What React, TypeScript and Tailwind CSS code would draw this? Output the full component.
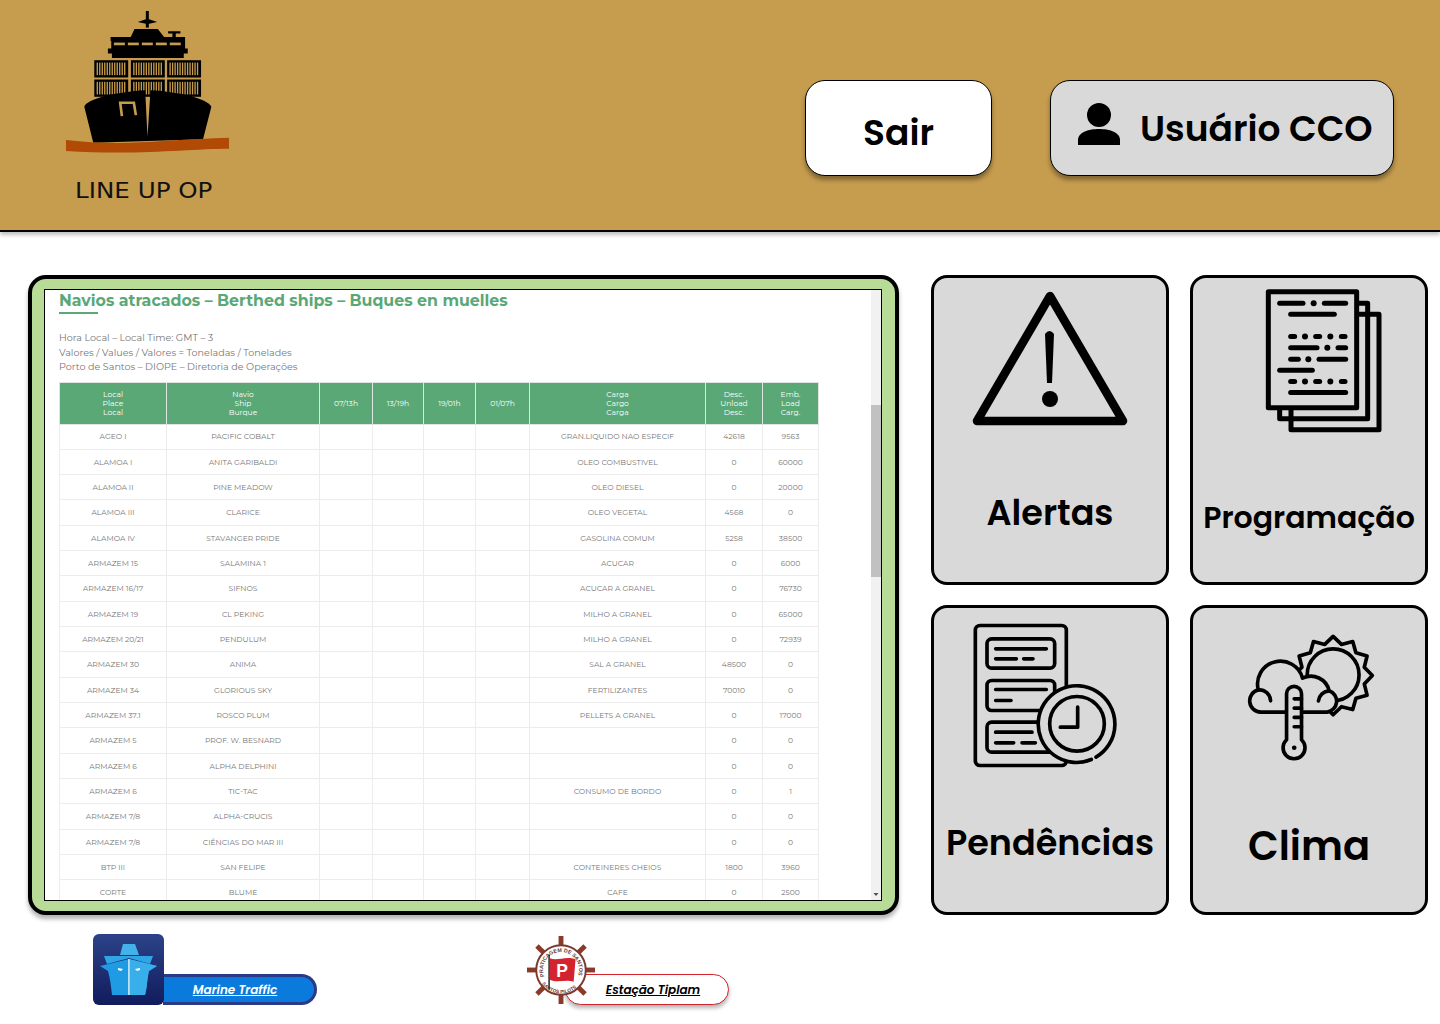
import { ReactNode } from "react";

const UI_FONT = "font-['Poppins','Inter','Noto_Sans',sans-serif]";
const CARD_BG = "#d9d9d9";

const ROWS = [
  ["AGEO I", "PACIFIC COBALT", "GRAN.LIQUIDO NAO ESPECIF", "42618", "9563"],
  ["ALAMOA I", "ANITA GARIBALDI", "OLEO COMBUSTIVEL", "0", "60000"],
  ["ALAMOA II", "PINE MEADOW", "OLEO DIESEL", "0", "20000"],
  ["ALAMOA III", "CLARICE", "OLEO VEGETAL", "4568", "0"],
  ["ALAMOA IV", "STAVANGER PRIDE", "GASOLINA COMUM", "5258", "38500"],
  ["ARMAZEM 15", "SALAMINA 1", "ACUCAR", "0", "6000"],
  ["ARMAZEM 16/17", "SIFNOS", "ACUCAR A GRANEL", "0", "76730"],
  ["ARMAZEM 19", "CL PEKING", "MILHO A GRANEL", "0", "65000"],
  ["ARMAZEM 20/21", "PENDULUM", "MILHO A GRANEL", "0", "72939"],
  ["ARMAZEM 30", "ANIMA", "SAL A GRANEL", "48500", "0"],
  ["ARMAZEM 34", "GLORIOUS SKY", "FERTILIZANTES", "70010", "0"],
  ["ARMAZEM 37.1", "ROSCO PLUM", "PELLETS A GRANEL", "0", "17000"],
  ["ARMAZEM 5", "PROF. W. BESNARD", "", "0", "0"],
  ["ARMAZEM 6", "ALPHA DELPHINI", "", "0", "0"],
  ["ARMAZEM 6", "TIC-TAC", "CONSUMO DE BORDO", "0", "1"],
  ["ARMAZEM 7/8", "ALPHA-CRUCIS", "", "0", "0"],
  ["ARMAZEM 7/8", "CIÊNCIAS DO MAR III", "", "0", "0"],
  ["BTP III", "SAN FELIPE", "CONTEINERES CHEIOS", "1800", "3960"],
  ["CORTE", "BLUME", "CAFE", "0", "2500"],
];

const COLUMN_WIDTHS = [107, 153, 53, 51, 52, 54, 176, 57, 56];

function ShipLogo() {
  const containerXs = [163, 273, 382];
  const containerYs = [180, 238];
  const stripes = Array.from({ length: 12 }, (_, i) => i);

  return (
    <svg viewBox="60 20 520 445" className="h-[148px] w-[173px]">
      <rect x="318" y="32" width="9" height="50" />
      <path d="M294 65 L318 57 H328 L352 65 L328 70 H318 Z" />
      <path d="M272 112 L284 86 H354 L374 112 Z" />
      <path d="M385 93 H422 V100 H408 V112 H398 V100 H385 Z" />
      <path d="M212 110 H436 V145 H444 V160 H432 V173 H216 V160 H204 V145 H214 V122 H212 Z" />
      {[222, 264, 306, 348, 390].map((x) => (
        <rect key={x} x={x} y="127" width="33" height="8" fill="#c69c4e" />
      ))}
      {containerYs.map((y) =>
        containerXs.map((x) => (
          <g key={`${x}-${y}`}>
            <rect x={x} y={y} width="102" height="52" />
            {stripes.map((i) => (
              <rect key={i} x={x + 7 + i * 7.5} y={y + 7} width="4" height="38" fill="#c69c4e" />
            ))}
          </g>
        )),
      )}
      <path d="M133 320 C140 295 230 275 316 270 L323 410 L332 270 C420 275 505 295 515 320 L490 418 L160 428 Z" />
      <path d="M246 348 L241 308 H282 L288 345" fill="none" stroke="#c69c4e" strokeWidth="8" />
      <path d="M78 420 C180 432 280 430 370 423 C440 418 510 415 568 413 V446 C450 446 300 466 78 453 Z" fill="#b04a05" />
    </svg>
  );
}

function AlertIcon() {
  return (
    <svg viewBox="0 0 160 140" className="h-[140px] w-[160px]">
      <path d="M80 5 L153 130 H7 Z" fill="none" stroke="#000" strokeWidth="8.500" strokeLinejoin="round" />
      <path d="M75 43 Q79.500 37 84 43 L82 92 H77 Z" />
      <circle cx="80" cy="108" r="8" />
    </svg>
  );
}

function DocumentsIcon() {
  const lines = [
    "M120 68 H190", "M254 68 H318", "M153 101 H284",
    "M153 168 H165", "M228 168 H240", "M305 168 H316",
    "M153 202 H232", "M295 202 H318",
    "M153 236 H176", "M238 236 H318",
    "M120 269 H218",
    "M153 303 H165", "M228 303 H240", "M305 303 H316",
    "M153 336 H318",
  ];
  const dots: [number, number][] = [[222, 68], [196, 168], [272, 168], [263, 202], [206, 236], [196, 303], [272, 303]];

  return (
    <svg viewBox="70 20 360 440" className="h-[147px] w-[120px]">
      <g fill="none" stroke="#000" strokeWidth="15" strokeLinejoin="round" strokeLinecap="round">
        <path d="M356 101 H418 V448 H154 V388" />
        <path d="M356 68 H384 V415 H120 V388" />
        <rect x="86" y="34" width="265" height="348" />
        {lines.map((d) => (
          <path key={d} d={d} />
        ))}
      </g>
      {dots.map(([cx, cy]) => (
        <circle key={`${cx}-${cy}`} cx={cx} cy={cy} r="9" />
      ))}
    </svg>
  );
}

function PendingIcon() {
  return (
    <svg viewBox="35 20 450 440" className="h-[147px] w-[150px]">
      <g fill="none" stroke="#000" strokeWidth="11" strokeLinecap="round" strokeLinejoin="round">
        <rect x="45" y="30" width="273" height="420" rx="14" />
        <rect x="80" y="70" width="203" height="88" rx="14" />
        <rect x="80" y="195" width="203" height="90" rx="14" />
        <rect x="80" y="320" width="203" height="90" rx="14" />
        <path d="M106 100 H258 M106 130 H168 M190 130 H218 M106 222 H258 M106 255 H152 M106 350 H215 M106 382 H160 M185 382 H225" />
        <circle cx="350" cy="325" r="118" fill={CARD_BG} stroke="none" />
        <path d="M407 425 A115 115 0 1 0 393 432" />
        <circle cx="350" cy="325" r="82" />
        <path d="M352 275 V335 H300" />
      </g>
    </svg>
  );
}

function WeatherIcon() {
  const sunPoints = Array.from({ length: 24 }, (_, i) => {
    const angle = (i * Math.PI) / 12;
    const radius = i % 2 === 0 ? 118 : 97;
    return `${280 + radius * Math.cos(angle)},${152 + radius * Math.sin(angle)}`;
  }).join(" ");

  return (
    <svg viewBox="15 15 400 400" className="h-[133px] w-[133px]">
      <g fill="none" stroke="#000" strokeWidth="11" strokeLinecap="round" strokeLinejoin="round">
        <polygon points={sunPoints} />
        <circle cx="280" cy="150" r="78" />
        <path
          d="M62 262 A34 34 0 0 1 55 195 A68 68 0 0 1 188 160 A56 56 0 0 1 268 198 A33 33 0 0 1 262 262 Z"
          fill={CARD_BG}
        />
        <path d="M55 195 A34 34 0 0 1 92 228 M268 198 A34 34 0 0 0 236 228" />
        <path d="M140 207 A22.500 22.500 0 0 1 185 207 V345 A33 33 0 1 1 140 345 Z" fill={CARD_BG} />
        <path d="M163 222 H185 M163 250 H185 M163 278 H185 M163 306 H185" />
      </g>
      <circle cx="163" cy="369" r="7" />
    </svg>
  );
}

function UserIcon() {
  return (
    <svg viewBox="0 0 42 42" className="h-[42px] w-[42px]">
      <circle cx="21" cy="12" r="12" />
      <path d="M0 42 V37 C0 29 11 26 21 26 C31 26 42 29 42 37 V42 Z" />
    </svg>
  );
}

function MarineIcon() {
  return (
    <svg viewBox="0 0 71 71" className="relative z-10 h-[71px] w-[71px]">
      <defs>
        <linearGradient id="marine-bg" x1="0" y1="0" x2="0" y2="1">
          <stop offset="0" stopColor="#2c4288" />
          <stop offset="1" stopColor="#111c5c" />
        </linearGradient>
      </defs>
      <rect width="71" height="71" rx="6" fill="url(#marine-bg)" />
      <path d="M30 10 H42 L46 21 H27 Z" fill="#43b2ea" />
      <path d="M11 22 H60 L57 30 L36 24 L14 30 Z" fill="#2fa5e6" />
      <path d="M7 32 L36 25 L64 32 L56 37 C54 45 54 55 52 61 H19 C18 52 17 44 15 37 Z" fill="#1e9be2" />
      <path d="M36 25 L64 32 L56 37 C54 45 54 55 52 61 H36 Z" fill="#38aeeb" />
      <rect x="35.300" y="25" width="1.200" height="36" fill="#fff" />
      <path d="M25 34 L30 35 L28 37 L25 36 Z M47 34 L42 35 L44 37 L47 36 Z" fill="#fff" />
    </svg>
  );
}

function PilotWheel() {
  const spokes = [0, 45, 90, 135, 180, 225, 270, 315];
  return (
    <svg viewBox="0 0 70 70" className="relative z-10 h-[70px] w-[68px] shrink-0">
      <defs>
        <path id="wheel-top" d="M19 44.250 A18.500 18.500 0 1 1 51 44.250" />
        <path id="wheel-bottom" d="M12 43 A24.500 24.500 0 0 0 58 43" />
      </defs>
      {spokes.map((angle) => (
        <rect key={angle} x="32.500" y="0" width="5" height="14" fill="#8a3a28" transform={`rotate(${angle} 35 35)`} />
      ))}
      <circle cx="35" cy="35" r="25.500" fill="#fff" stroke="#7b3a2c" strokeWidth="2" />
      <text fontSize="5.500" fontWeight="700" fill="#6b3a2c" fontFamily="Liberation Sans, sans-serif">
        <textPath href="#wheel-top" startOffset="3">PRATICAGEM DE SANTOS</textPath>
      </text>
      <text fontSize="5" fontWeight="700" fill="#6b3a2c" fontFamily="Liberation Sans, sans-serif">
        <textPath href="#wheel-bottom" startOffset="7">SANTOS PILOTS</textPath>
      </text>
      <rect x="22" y="19" width="1.500" height="36" fill="#222" />
      <path d="M23.500 23 C32 26 40 20 50 24 L48 47 C40 44 32 49 23.500 45 Z" fill="#d3232e" />
      <text x="36" y="42" textAnchor="middle" fontSize="18" fontWeight="700" fill="#fff" fontFamily="Liberation Sans, sans-serif">P</text>
    </svg>
  );
}

function MenuCard({ label, labelClass, iconClass, children }: { label: string; labelClass: string; iconClass: string; children: ReactNode }) {
  return (
    <div className="flex h-[310px] w-[238px] flex-col items-center rounded-2xl border-[3px] border-black bg-[#d9d9d9]">
      <div className={iconClass}>{children}</div>
      <span className={`${UI_FONT} font-semibold whitespace-nowrap text-black ${labelClass}`}>{label}</span>
    </div>
  );
}

function BerthTable() {
  return (
    <table className="w-[759px] table-fixed border-collapse text-center font-['Montserrat','Lato',sans-serif] text-[7.600px] text-[#777]">
      <colgroup>
        {COLUMN_WIDTHS.map((width, i) => (
          <col key={i} style={{ width }} />
        ))}
      </colgroup>
      <thead>
        <tr className="h-[42px] bg-[#5aa876] leading-[9px] font-normal text-white">
          {["Local|Place|Local", "Navio|Ship|Burque", "07/13h", "13/19h", "19/01h", "01/07h", "Carga|Cargo|Carga", "Desc.|Unload|Desc.", "Emb.|Load|Carg."].map((head) => (
            <th key={head} className="border border-[#dfe6e1] p-0 font-normal">
              {head.split("|").map((line) => (
                <div key={line}>{line}</div>
              ))}
            </th>
          ))}
        </tr>
      </thead>
      <tbody>
        {ROWS.map((row, i) => (
          <tr key={i} className="h-[25.330px]">
            <td className="border border-[#ececec] p-0 pt-px">{row[0]}</td>
            <td className="border border-[#ececec] p-0 pt-px">{row[1]}</td>
            <td className="border border-[#ececec] p-0" />
            <td className="border border-[#ececec] p-0" />
            <td className="border border-[#ececec] p-0" />
            <td className="border border-[#ececec] p-0" />
            <td className="border border-[#ececec] p-0 pt-px">{row[2]}</td>
            <td className="border border-[#ececec] p-0 pt-px">{row[3]}</td>
            <td className="border border-[#ececec] p-0 pt-px">{row[4]}</td>
          </tr>
        ))}
      </tbody>
    </table>
  );
}

export default function App() {
  return (
    <div className="h-[1024px] w-[1440px] overflow-hidden bg-white">
      <header className="flex h-[232px] items-start justify-between border-b-2 border-black bg-[#c69c4e] shadow-[0_3px_4px_rgba(0,0,0,0.25)]">
        <div className="ml-[60px] flex w-[173px] flex-col pt-[7px]">
          <ShipLogo />
          <span className="mt-[25px] ml-[15px] origin-left scale-x-[1.17] font-['DejaVu_Sans',sans-serif] text-[21px] leading-[22px] whitespace-nowrap text-[#111]">LINE UP OP</span>
        </div>
        <div className={`${UI_FONT} mt-[80px] mr-[46px] flex gap-[58px]`}>
          <button className="flex h-[96px] w-[187px] items-center justify-center rounded-[20px] border border-black bg-white pt-[10px] text-[36px] font-semibold text-black shadow-[0_4px_4px_rgba(0,0,0,0.35)]">
            Sair
          </button>
          <button className="flex h-[96px] w-[344px] items-start gap-[20px] rounded-[20px] border border-black bg-[#d9d9d9] pt-[22px] pl-[27px] text-[36px] leading-[50px] font-semibold text-black shadow-[0_4px_4px_rgba(0,0,0,0.35)]">
            <UserIcon />
            <span className="mt-[1px] whitespace-nowrap">Usuário CCO</span>
          </button>
        </div>
      </header>

      <main className="flex gap-[32px] pt-[43px] pl-[28px]">
        <section className="h-[640px] w-[871px] rounded-[18px] border-[4px] border-black bg-[#b9db98] pt-[10px] pr-[13px] pb-[10px] pl-[12px] shadow-[0_4px_4px_rgba(0,0,0,0.3)]">
          <div className="flex h-full border border-black bg-white">
            <div className="h-full flex-1 overflow-hidden pl-[14px] font-['Montserrat','Lato',sans-serif]">
              <h2 className="mt-[1px] text-[15.800px] leading-[20px] font-bold whitespace-nowrap text-[#5aa876]">
                Navios atracados – Berthed ships – Buques en muelles
              </h2>
              <div className="mt-[1px] h-[2px] w-[39px] bg-[#5aa876]" />
              <div className="mt-[17px] text-[9.600px] leading-[14.500px] text-[#777]">
                <p>Hora Local – Local Time: GMT – 3</p>
                <p>Valores / Values / Valores = Toneladas / Tonelades</p>
                <p>Porto de Santos – DIOPE – Diretoria de Operações</p>
              </div>
              <div className="mt-[7px]">
                <BerthTable />
              </div>
            </div>
            <div className="flex w-[10px] flex-col bg-[#f1f1f1]">
              <div className="mt-[115px] h-[172px] bg-[#c1c1c1]" />
              <svg viewBox="0 0 10 6" className="mt-auto mb-[2px] h-[6px] w-[10px]">
                <path d="M2.500 1 H7.500 L5 4 Z" fill="#505050" />
              </svg>
            </div>
          </div>
        </section>

        <div className="grid grid-cols-[238px_238px] grid-rows-[310px_310px] gap-x-[21px] gap-y-[20px]">
          <MenuCard label="Alertas" labelClass="mt-[60px] text-[35px] leading-[44px]" iconClass="mt-[13px]">
            <AlertIcon />
          </MenuCard>
          <MenuCard label="Programação" labelClass="mt-[64px] text-[30px] leading-[40px]" iconClass="mt-[9px] ml-[28px]">
            <DocumentsIcon />
          </MenuCard>
          <MenuCard label="Pendências" labelClass="mt-[52px] text-[35px] leading-[44px]" iconClass="mt-[14px] -ml-[6px]">
            <PendingIcon />
          </MenuCard>
          <MenuCard label="Clima" labelClass="mt-[57px] text-[40px] leading-[52px]" iconClass="mt-[22px] ml-[5px]">
            <WeatherIcon />
          </MenuCard>
        </div>
      </main>

      <footer className={`${UI_FONT} mt-[19px] flex items-end pl-[93px]`}>
        <div className="flex w-[434px] items-end">
          <MarineIcon />
          <a className="-ml-[1px] flex h-[31px] w-[154px] items-center justify-center rounded-r-full border-[3px] border-l-0 border-[#2b3a87] bg-[#0a7bdc] pr-[7px] text-[12px] font-semibold text-white italic underline">
            Marine Traffic
          </a>
        </div>
        <div className="flex items-end">
          <PilotWheel />
          <a className="-ml-[30px] flex h-[31px] w-[164px] items-center justify-center rounded-2xl border border-[#d3232e] bg-white pl-[12px] text-[12px] font-semibold text-black italic underline shadow-[0_3px_4px_rgba(0,0,0,0.3)]">
            Estação Tiplam
          </a>
        </div>
      </footer>
    </div>
  );
}
